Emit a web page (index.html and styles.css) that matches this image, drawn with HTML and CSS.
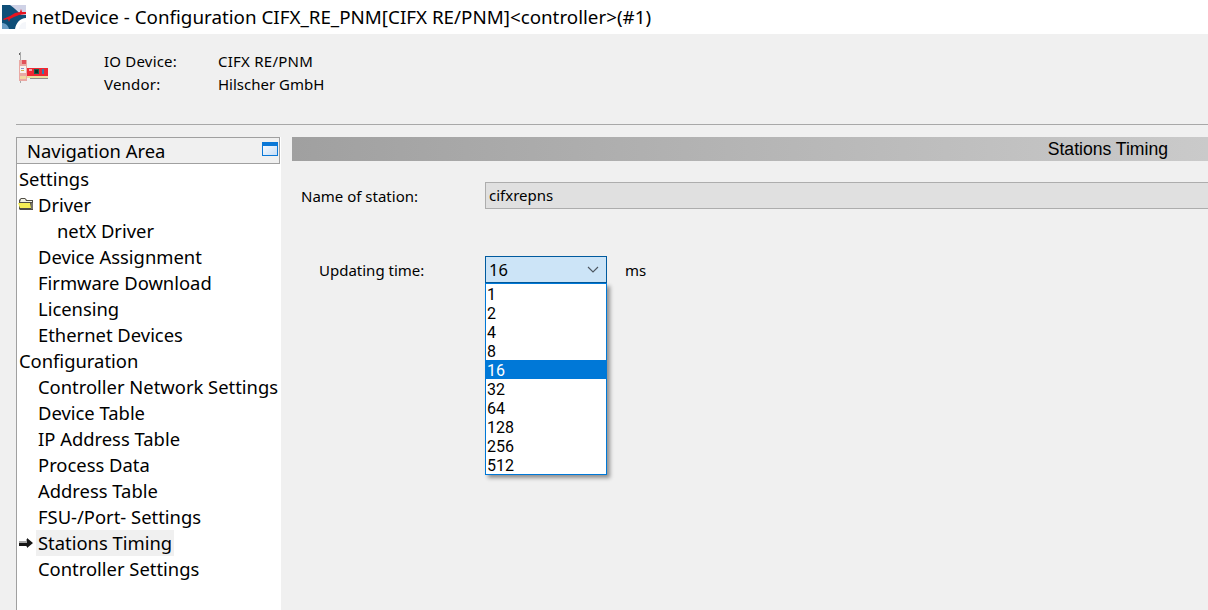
FILE: index.html
```html
<!DOCTYPE html>
<html lang="en">
<head>
<meta charset="utf-8">
<title>netDevice - Configuration</title>
<link rel="stylesheet" href="styles.css">
</head>
<body>
<div class="titlebar">
  <svg class="app-icon" width="24" height="24" viewBox="0 0 24 24">
    <rect width="24" height="24" fill="#0f4f78"/>
    <path d="M8 0H24V10H19C16 6 12 3 8 0Z" fill="#cfd2e6"/>
    <path d="M0 18C3 18 6 20 7 24H0Z" fill="#6a9cc4"/>
    <path d="M24 13C18 13 14 18 13 24H24Z" fill="#ffffff"/>
    <path d="M20 18C22 17 23 17 24 17V24H17C17 22 18 20 20 18Z" fill="#f4f6fa"/>
    <path d="M1 14L8 11L13 8L18 7L19 4L20 7H24V9L17 10L12 12L8 14L7 17L6 14L2 15Z" fill="#e8141f"/>
  </svg>
  <span class="title-text">netDevice - Configuration CIFX_RE_PNM[CIFX RE/PNM]&lt;controller&gt;(#1)</span>
</div>
<header class="device">
  <svg class="card-icon" width="32" height="32" viewBox="0 0 32 32">
    <path d="M4.5 0V31" stroke="#a8a8a8" stroke-width="1"/>
    <rect x="3" y="1" width="1" height="2" fill="#666"/>
    <rect x="3" y="8" width="8" height="21" fill="#e9a9a4"/>
    <rect x="6" y="8" width="4" height="4" fill="#e2505a"/>
    <rect x="4" y="14" width="6" height="7" fill="#f5f1ee"/>
    <rect x="5" y="16" width="3" height="1" fill="#8a93c8"/>
    <rect x="5" y="18" width="3" height="1" fill="#d9b24a"/>
    <rect x="4" y="24" width="6" height="3" fill="#f0d8a0"/>
    <rect x="11" y="16" width="21" height="8" fill="#ee2833"/>
    <rect x="13" y="17" width="3" height="2" fill="#f7a0a8"/>
    <rect x="18" y="17" width="5" height="5" fill="#16604c"/>
    <rect x="19" y="18" width="3" height="3" fill="#0c3028"/>
    <rect x="26" y="17" width="2" height="5" fill="#2f7fb0"/>
    <rect x="11" y="24" width="21" height="2" fill="#eadfa0"/>
    <rect x="14" y="26" width="18" height="1" fill="#8a8a8a"/>
  </svg>
  <dl class="device-info">
    <dt>IO Device:</dt><dd class="device-name">CIFX RE/PNM</dd>
    <dt>Vendor:</dt><dd>Hilscher GmbH</dd>
  </dl>
</header>
<main class="main">
  <nav class="nav">
    <div class="nav-head">
      <span>Navigation Area</span>
      <svg class="nav-toggle" width="16" height="14" viewBox="0 0 16 14">
        <defs>
          <linearGradient id="pane" x1="0" y1="0" x2="1" y2="1">
            <stop offset="0" stop-color="#ffffff"/>
            <stop offset="1" stop-color="#c4dcf6"/>
          </linearGradient>
        </defs>
        <rect x="0.5" y="0.5" width="15" height="13" fill="url(#pane)" stroke="#0a78d7"/>
        <rect x="0" y="0" width="16" height="4" fill="#0a78d7"/>
      </svg>
    </div>
    <ul class="tree">
      <li class="root">Settings</li>
      <li class="item has-icon">
        <svg class="tree-icon" width="16" height="13" viewBox="0 0 16 13">
          <path d="M1 2L3 0H7L9 2H15V12H2L1 11Z" fill="#4f4c44"/>
          <path d="M3 1H7L8 3H14V4H2Z" fill="#f2f2e4"/>
          <path d="M0 5H12L13 10H2Z" fill="#f5ee55"/>
          <path d="M13 5H15V11H13Z" fill="#77736a"/>
        </svg>Driver</li>
      <li class="sub">netX Driver</li>
      <li class="item">Device Assignment</li>
      <li class="item">Firmware Download</li>
      <li class="item">Licensing</li>
      <li class="item">Ethernet Devices</li>
      <li class="root">Configuration</li>
      <li class="item">Controller Network Settings</li>
      <li class="item">Device Table</li>
      <li class="item">IP Address Table</li>
      <li class="item">Process Data</li>
      <li class="item">Address Table</li>
      <li class="item">FSU-/Port- Settings</li>
      <li class="item has-icon">
        <svg class="tree-icon arrow" width="15" height="11" viewBox="0 0 15 11">
          <path d="M0 3H7V1L9 1V9H7V8H0Z" fill="#a6a6a6"/>
          <path d="M0 5H8V0L14 5L8 10V8H0Z" fill="#161616"/>
          <path d="M0 3H8V5H0Z" fill="#a6a6a6"/>
        </svg><span class="current">Stations Timing</span></li>
      <li class="item">Controller Settings</li>
    </ul>
  </nav>
  <section class="content">
    <div class="banner"><span>Stations Timing</span></div>
    <div class="row name-row">
      <span class="label">Name of station:</span>
      <div class="readonly">cifxrepns</div>
    </div>
    <div class="row time-row">
      <span class="label label-indent">Updating time:</span>
      <div class="combo-wrap">
        <div class="combo">
          <span>16</span>
          <svg width="12" height="7" viewBox="0 0 12 7"><path d="M1 1L6 6L11 1" fill="none" stroke="#4d5660" stroke-width="1.1"/></svg>
        </div>
        <ul class="list">
          <li>1</li><li>2</li><li>4</li><li>8</li><li class="selected">16</li>
          <li>32</li><li>64</li><li>128</li><li>256</li><li>512</li>
        </ul>
      </div>
      <span class="unit">ms</span>
    </div>
  </section>
</main>
</body>
</html>
```
FILE: styles.css
```css
* { box-sizing: border-box; }
html, body { margin: 0; height: 100%; }
body {
  width: 1208px;
  height: 610px;
  overflow: hidden;
  background: #f0f0f0;
  color: #000;
  font-family: "Noto Sans", "Open Sans", sans-serif;
  font-size: 15px;
}
ul { list-style: none; margin: 0; padding: 0; }

.titlebar {
  height: 34px;
  background: #fff;
  display: flex;
  align-items: center;
  padding-left: 2px;
  gap: 6px;
}
.app-icon { flex: none; }
.title-text { font-size: 18.8px; white-space: nowrap; }

.device {
  height: 91px;
  margin-left: 16px;
  border-bottom: 1px solid #a8a8a8;
  display: flex;
  align-items: flex-start;
  padding-top: 16px;
}
.card-icon { flex: none; margin-top: 2px; }
.device-info {
  margin: 0 0 0 56px;
  display: grid;
  grid-template-columns: 114px auto;
  grid-auto-rows: 23px;
  line-height: 23px;
}
.device-info dd { margin: 0; }
.device-info dt { letter-spacing: 0.2px; }
.device-info .device-name { letter-spacing: 0.25px; }

.main {
  display: flex;
  padding: 12px 0 0 16px;
  height: 485px;
}
.nav {
  width: 265px;
  flex: none;
  background: #fff;
  border-left: 1px solid #a0a0a0;
}
.nav-head {
  height: 27px;
  background: #f0f0f0;
  border: 1px solid #a0a0a0;
  border-left: 0;
  margin-right: 1px;
  padding: 0 1px 0 10px;
  display: flex;
  align-items: center;
  justify-content: space-between;
  font-size: 18.4px;
}
.nav-toggle { margin-bottom: 4px; }
.tree { padding-top: 2px; font-size: 18.4px; }
.tree li { height: 26px; line-height: 26px; white-space: nowrap; }
.root { padding-left: 2px; }
.item { padding-left: 21px; position: relative; }
.sub { padding-left: 40px; }
.tree-icon { position: absolute; left: 1px; top: 6px; }
.tree-icon.arrow { left: 2px; top: 8px; }
.current { display: inline-block; background: #f0f0f0; margin-left: -2px; padding: 0 2px; }

.content { flex: 1; margin-left: 11px; min-width: 0; }
.banner {
  height: 24px;
  background: linear-gradient(to right, #a0a0a0, #cacaca);
  text-align: right;
  padding-right: 40px;
  line-height: 24px;
  font-family: "Liberation Sans", sans-serif;
  font-size: 17.6px;
}
.row { display: flex; align-items: center; position: relative; }
.label { width: 193px; flex: none; padding-left: 9px; }
.label-indent { padding-left: 27px; }
.name-row { margin-top: 21px; height: 27px; }
.readonly {
  flex: 1;
  height: 27px;
  line-height: 24px;
  background: #e0e0e0;
  border: 1px solid #adadad;
  border-right: 0;
  padding-left: 3px;
}
.time-row { margin-top: 47px; height: 27px; }
.combo-wrap { position: relative; width: 122px; flex: none; }
.combo {
  height: 27px;
  background: #cce4f7;
  border: 1px solid #005a9e;
  display: flex;
  align-items: center;
  justify-content: space-between;
  padding: 0 7px 0 3px;
  font-size: 16.5px;
}
.list {
  position: absolute;
  left: 0;
  top: 27px;
  width: 122px;
  background: #fff;
  border: 1px solid #0078d7;
  box-shadow: 3px 3px 4px rgba(0, 0, 0, 0.4);
  font-family: Roboto, "Noto Sans", sans-serif;
}
.list li { height: 19px; line-height: 19px; padding: 1px 0 0 1px; font-size: 16px; }
.list .selected { background: #0078d7; color: #fff; }
.unit { margin-left: 18px; }
```
